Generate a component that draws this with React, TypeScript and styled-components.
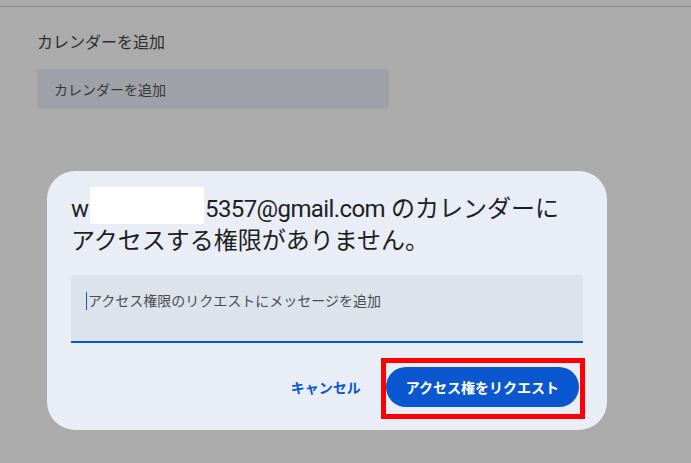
import styled, { createGlobalStyle } from 'styled-components'

const GlobalStyle = createGlobalStyle`
    html, body {
        margin: 0;
        padding: 0;
        background: #ababab;
        font-family: Roboto, "Noto Sans CJK JP", sans-serif;
    }
`

const Page = styled.div`
    position: relative;
    width: 691px;
    height: 463px;
    overflow: hidden;
    background: #ababab;
`

const TopRule = styled.div`
    height: 6px;
    border-bottom: 1px solid #8a8a8a;
`

const Section = styled.section`
    display: flex;
    flex-direction: column;
    gap: 12px;
    padding: 22px 0 0 37px;
`

const SectionTitle = styled.h2`
    margin: 0;
    font-size: 16px;
    font-weight: 400;
    line-height: 28px;
    color: #2e2e2e;
`

const NameField = styled.div`
    display: flex;
    align-items: center;
    width: 352px;
    height: 40px;
    box-sizing: border-box;
    padding: 0 17px 1px;
    border-radius: 4px;
    background: #9ea1a8;
    font-size: 14px;
    color: #383838;
`

const Overlay = styled.div`
    position: absolute;
    inset: 0;
    display: flex;
    align-items: flex-start;
    padding: 171px 0 0 47px;
`

const Dialog = styled.div`
    width: 560px;
    box-sizing: border-box;
    padding: 22px 24px 23px;
    border-radius: 28px;
    background: #e9eef6;
    display: flex;
    flex-direction: column;
`

const Title = styled.h1`
    margin: 0;
    font-size: 24px;
    font-weight: 400;
    line-height: 32px;
    color: #1f1f1f;
`

const Email = styled.span`
    letter-spacing: -0.6px;
`

/* privacy mask painted over part of the address */
const Redacted = styled.span`
    display: inline-block;
    width: 114px;
    height: 37px;
    margin: -6px 1px -6px 1px;
    background: #ffffff;
    vertical-align: -1px;
`

const MessageField = styled.div`
    margin-top: 18px;
    height: 68px;
    box-sizing: border-box;
    padding: 16px 16px 0 15px;
    border-radius: 4px 4px 0 0;
    background: #dde3ea;
    border-bottom: 2px solid #0b57d0;
    font-size: 14px;
    line-height: 20px;
    color: #4a4d50;
`

const Caret = styled.span`
    display: inline-block;
    width: 1px;
    height: 18px;
    margin-right: 1px;
    background: #0b57d0;
    vertical-align: -4px;
`

const Actions = styled.div`
    margin-top: 24px;
    padding-right: 4px;
    display: flex;
    justify-content: flex-end;
    align-items: center;
    gap: 13px;
`

const Button = styled.button<{ $filled?: boolean }>`
    height: 40px;
    padding: 0 ${({ $filled }) => ($filled ? '20px' : '12px')};
    border: none;
    border-radius: 20px;
    font-family: inherit;
    font-size: 14px;
    font-weight: 700;
    background: ${({ $filled }) => ($filled ? '#0b57d0' : 'transparent')};
    color: ${({ $filled }) => ($filled ? '#ffffff' : '#0b57d0')};
    cursor: pointer;
`

const Highlight = styled.div`
    position: relative;
    display: flex;

    &::after {
        content: '';
        position: absolute;
        left: -5px;
        right: -6px;
        top: -9px;
        bottom: -12px;
        border: 5px solid #ff0000;
        pointer-events: none;
    }
`

export default function App() {
    return (
        <Page>
            <GlobalStyle />
            <TopRule />
            <Section>
                <SectionTitle>カレンダーを追加</SectionTitle>
                <NameField>カレンダーを追加</NameField>
            </Section>
            <Overlay>
                <Dialog>
                    <Title>
                        w<Redacted />
                        <Email>5357@gmail.com</Email> のカレンダーに
                        <br />
                        アクセスする権限がありません。
                    </Title>
                    <MessageField>
                        <Caret />
                        アクセス権限のリクエストにメッセージを追加
                    </MessageField>
                    <Actions>
                        <Button>キャンセル</Button>
                        <Highlight>
                            <Button $filled>アクセス権をリクエスト</Button>
                        </Highlight>
                    </Actions>
                </Dialog>
            </Overlay>
        </Page>
    )
}
